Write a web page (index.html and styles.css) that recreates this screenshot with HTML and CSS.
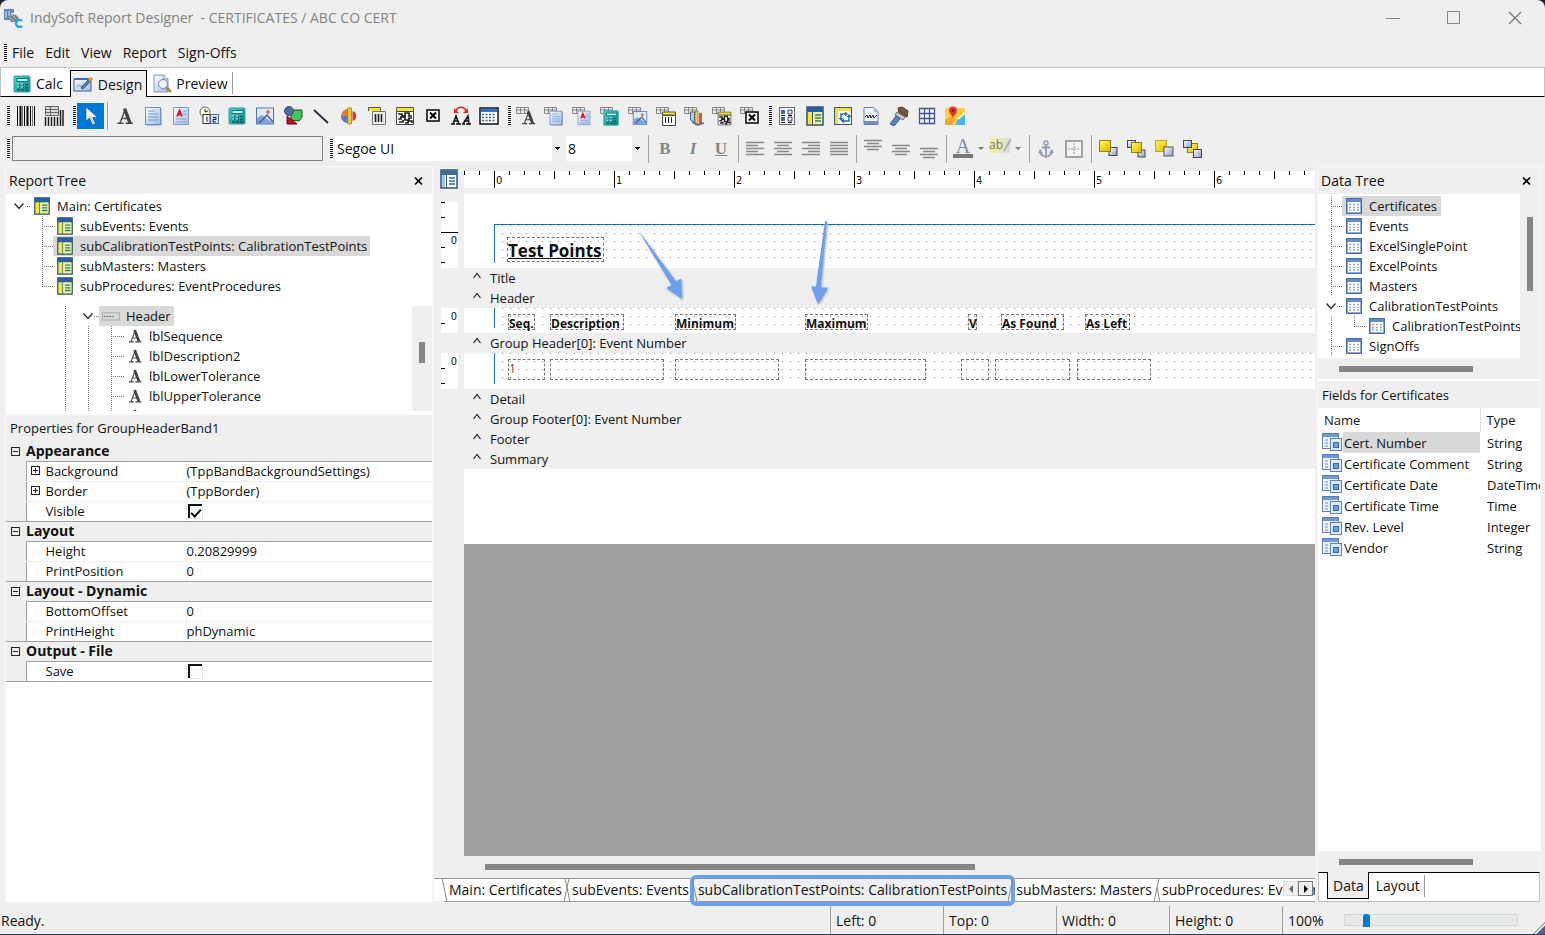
FILE: index.html
```html
<!DOCTYPE html>
<html lang="en">
<head>
    <meta charset="UTF-8">
    <meta name="viewport" content="width=device-width, initial-scale=1.0">
    <title>IndySoft Report Designer</title>
    <link rel="stylesheet" href="styles.css">
</head>
<body>
    <!-- shared icons -->
    <svg class="defs" aria-hidden="true">
        <defs>
            <linearGradient id="blue" x1="0" y1="0" x2="1" y2="1"><stop offset="0" stop-color="#fff"/><stop offset="1" stop-color="#9dbbe8"/></linearGradient>
            <linearGradient id="yellow" x1="0" y1="0" x2="1" y2="1"><stop offset="0" stop-color="#ffff50"/><stop offset="1" stop-color="#e0b400"/></linearGradient>
            <linearGradient id="steel" x1="0" y1="0" x2="1" y2="1"><stop offset="0" stop-color="#fff"/><stop offset="1" stop-color="#8c9cc4"/></linearGradient>
            <linearGradient id="teal" x1="0" y1="0" x2="1" y2="1"><stop offset="0" stop-color="#3fd6cb"/><stop offset="1" stop-color="#078c91"/></linearGradient>
        </defs>
        <symbol id="i-app" viewBox="0 0 20 20"><path d="M1 1h10v4H8v7H1z" fill="#5b88b5"/><path d="M3 3v7M6 3v5" stroke="#dbe8f5"/><path d="M5 10l4-4 4 1 3 3-4 4-4 0z" fill="#77808c"/><path d="M8 6l5 5M6 9l5 4" stroke="#c7ccd3"/><path d="M19 13a3.500 3.500 0 1 0 0 5" fill="none" stroke="#29a4dd" stroke-width="2.500"/></symbol>
        <symbol id="i-calc" viewBox="0 0 20 20"><rect x="2" y="2" width="16" height="16" rx="1" fill="url(#teal)" stroke="#3a9a9c"/><rect x="5" y="4.500" width="11" height="3" fill="#b8f3e9" stroke="#17797d"/><path d="M5 10.500h3M9 10.500h3M13 10.500h3M5 13.500h3M9 13.500h3M13 13.500h3M5 16h3M9 16h3M13 16h3" stroke="#08585e" stroke-width="1.400"/><path d="M5 10h2M9 10h2M5 13h2M9 13h2" stroke="#fff"/></symbol>
        <symbol id="i-design" viewBox="0 0 20 20"><rect x="1" y="4" width="17" height="12" fill="url(#blue)" stroke="#405c9c"/><path d="M1 4h17" stroke="#4264b4" stroke-width="2"/><path d="M4 12c2-5 3 2 6-2" fill="none" stroke="#7787a8"/><path d="M8 13l8-9 3-1-1 3-8 8z" fill="#5384c8" stroke="#333" stroke-width=".7"/><path d="M15 4l3-2 2 2-2 3z" fill="#df9b3c"/></symbol>
        <symbol id="i-preview" viewBox="0 0 20 20"><path d="M2 1h10l4 4v13H2z" fill="url(#blue)" stroke="#8796b5"/><path d="M12 1v4h4" fill="#fff" stroke="#8796b5"/><circle cx="11" cy="10" r="4.500" fill="#e9f3ff" stroke="#818b9c"/><path d="M14.500 13.500l4.500 4.500" stroke="#ad8745" stroke-width="3"/></symbol>
        <symbol id="i-bars" viewBox="0 0 20 20"><path d="M1.500 0v20M8.500 0v20M14.500 0v20M18.500 0v20" stroke="#000"/><path d="M4.500 0v20M11.500 0v20" stroke="#000" stroke-width="2"/><path d="M6.500 0v20M16.500 0v20" stroke="#777"/></symbol>
        <symbol id="i-bars2" viewBox="0 0 20 20"><path d="M1.500.5h13v9h-13zM1 3.500h13M1 6.500h13M6.500.5v9" fill="#ddd" stroke="#666"/><path d="M1.500 11v9M4.500 11v9M7.500 11v9M10.500 11v9M13.500 11v9M16.500 4v16M19 4v16" stroke="#222" stroke-width="1.500"/></symbol>
        <symbol id="i-pointer" viewBox="0 0 20 20"><path d="M5 1v14l3.500-3 3 7 3-1.500-3-6h5z" fill="#fff" stroke="#0b4f8f" stroke-width=".6"/><path d="M9 10l4 8" stroke="#a9b4bf"/></symbol>
        <symbol id="i-text" viewBox="0 0 20 20"><path d="M2.500 17.300h6M10.500 17.300h7.500" stroke="#444" stroke-width="1.500"/><path d="M5 17L10 4M7 12.500h6" fill="none" stroke="#555" stroke-width="1.500"/><path d="M9.500 2.500l5.500 14.500" stroke="#444" stroke-width="3.500"/></symbol>
        <symbol id="i-memo" viewBox="0 0 20 20"><rect x="2.500" y="1.500" width="15" height="17" fill="url(#blue)" stroke="#6e8fc9"/><path d="M5 5h7M5 8h10M5 11h10M5 14h10" stroke="#7597cf"/><path d="M18 3v16H4" fill="none" stroke="#7892bf"/></symbol>
        <symbol id="i-rich" viewBox="0 0 20 20"><rect x="2.500" y="1.500" width="15" height="17" fill="url(#blue)" stroke="#8a99c0"/><path d="M6 10.500l2.500-6 2.500 6M7 8.500h3" fill="none" stroke="#e01020" stroke-width="1.800"/><path d="M12 5h4M12 8h4M5 13h10M5 16h10" stroke="#8aa0cd"/></symbol>
        <symbol id="i-clock" viewBox="0 0 20 20"><circle cx="6" cy="6" r="5" fill="#fff8dc" stroke="#665"/><path d="M6 3v3l3-1" fill="none" stroke="#333"/><rect x="4" y="8.500" width="7" height="9" fill="#fff" stroke="#333"/><rect x="11.500" y="8.500" width="8" height="9" fill="#cfe0f7" stroke="#4f6c9a"/><path d="M7 11h1v5M14 11.500h3v2h-3v2.500h3" fill="none" stroke="#223"/></symbol>
        <symbol id="i-image" viewBox="0 0 20 20"><rect x="1.500" y="2" width="17" height="16" fill="#dcecff" stroke="#5672a8"/><path d="M2 12l5-3 4 3 7 5v1H2z" fill="#7aa2df"/><path d="M4 17l8-8 6 7" fill="none" stroke="#455b8c" stroke-width="1.500"/><circle cx="13" cy="6" r="2" fill="#e1794d"/></symbol>
        <symbol id="i-shapes" viewBox="0 0 20 20"><path d="M8 4h11v7l-3 4-8-1z" fill="#3fca54" stroke="#174d22"/><circle cx="6" cy="5" r="4.500" fill="#4d6d9d" stroke="#334d76"/><path d="M4 10l10 8H4z" fill="#c11326" stroke="#701"/></symbol>
        <symbol id="i-line" viewBox="0 0 20 20"><path d="M3 4l14 13" stroke="#222b3c" stroke-width="1.800"/></symbol>
        <symbol id="i-chart" viewBox="0 0 20 20"><path d="M9 3a7 7 0 0 0 0 14z" fill="#e87934"/><path d="M9 10H2a7 7 0 0 0 7 7z" fill="#557dd3"/><path d="M8.500 2h4v16h-4z" fill="#f4c62d" stroke="#9c7413" stroke-width=".7"/><path d="M13.500 5c5 1 5 9 0 10z" fill="#cf3b34"/></symbol>
        <symbol id="i-barcode" viewBox="0 0 20 20"><path d="M1.500 5V1.500h12V5" fill="#f4e51e" stroke="#555"/><path d="M5.500 5.500h13v13h-13z" fill="#eee" stroke="#777"/><path d="M8.500 8v8M11.500 8v8M14.500 8v8" stroke="#222" stroke-width="1.600"/></symbol>
        <symbol id="i-qr" viewBox="0 0 20 20"><path d="M1.500 1.500h17v4h-17z" fill="#f4e51e" stroke="#555"/><path d="M1.500 5.500h17v13h-17z" fill="#fff" stroke="#444"/><path d="M3 8h4v2h3V7h4v3h3M3 13h3v-2h4v3h4v-2h3M4 16h4v-2M10 17h3v-2h4v2" fill="none" stroke="#222" stroke-width="1.700"/></symbol>
        <symbol id="i-xbox" viewBox="0 0 20 20"><rect x="4" y="4" width="12" height="11" fill="#fff" stroke="#000" stroke-width="1.500"/><path d="M7 6.500l6 6M13 6.500l-6 6" stroke="#000" stroke-width="2"/></symbol>
        <symbol id="i-swap" viewBox="0 0 20 20"><path d="M5 5c2-5 8-5 10 0" fill="none" stroke="#d22" stroke-width="1.500"/><path d="M3 2v5h5zM17 2v5h-5z" fill="#d22"/><path d="M0 18h4M5 18h5M11 18h3M15 18h5M2 18l3-8 3 8M3 15h4M12 18l5-8 1 8M13 15h5" fill="none" stroke="#111" stroke-width="1.500"/></symbol>
        <symbol id="i-table" viewBox="0 0 20 20"><rect x="1" y="2" width="18" height="16" fill="#fff" stroke="#111" stroke-width="1.500"/><path d="M2 3h16v3H2z" fill="#2674c9"/><path d="M3 8.500h14M3 11.500h14M3 14.500h14" stroke="#425f9b" stroke-width="1.500" stroke-dasharray="2 1.500"/></symbol>
        <symbol id="i-dbtag" viewBox="0 0 20 20"><path d="M.5 1.500h12v6H.5zM.5 4h12M4.500 1.500v6M8.500 1.500v6" fill="#eee" stroke="#888"/></symbol>
        <symbol id="i-tree" viewBox="0 0 20 20"><rect x="2.500" y="1.500" width="15" height="17" fill="#fff" stroke="#667"/><path d="M4 4h4v4H4zM4 11h4v4H4z" fill="#3e64a0"/><path d="M11 4h4v4h-4zM11 11h4v4h-4z" fill="#dce6f5" stroke="#222" stroke-width=".8"/><path d="M4 9.500h4M4 16.500h4M11 9.500h4M11 16.500h4" stroke="#222"/></symbol>
        <symbol id="i-report" viewBox="0 0 20 20"><rect x="2" y="1" width="16" height="18" fill="#d9ef82" stroke="#345270" stroke-width="1.500"/><path d="M2 1h16v5H2z" fill="#285f9e"/><path d="M3 6h3.500v12H3z" fill="#f6e53b"/><path d="M7.500 6v13" stroke="#345270"/><path d="M8 6h9v12H8z" fill="#eef88d"/><path d="M10 9h6M10 12h6M10 15h6" stroke="#287a91" stroke-width="1.500"/></symbol>
        <symbol id="i-report-blue" viewBox="0 0 20 20"><rect x="2" y="1" width="16" height="18" fill="#fff" stroke="#345270" stroke-width="1.500"/><path d="M2 1h16v5H2z" fill="#446e91"/><path d="M3 6h3v12H3z" fill="#9bc5e8"/><path d="M7.500 6v13" stroke="#345270"/><path d="M10 9h6M10 12h6M10 15h6" stroke="#2b65b5" stroke-width="1.500"/></symbol>
        <symbol id="i-flow" viewBox="0 0 20 20"><rect x="1.500" y="1.500" width="17" height="17" fill="#fff" stroke="#456"/><path d="M2 2h16v3H2zM2 5h3v13H2z" fill="#f1df3c"/><path d="M8 13V8h4M16 9v6h-5" fill="none" stroke="#1769c2" stroke-width="1.500"/><path d="M12 5.500l3 2.500-3 2.500zM5.500 12h5l-2.500 3zM13.500 11l2.500-3 2.500 3zM11 12.500v5l-3-2.500z" fill="#1769c2"/></symbol>
        <symbol id="i-page" viewBox="0 0 20 20"><path d="M3 1.500h10l4 4v13H3z" fill="#eef4ff" stroke="#6f7fa5"/><path d="M13 2v4h4" fill="#a9b9da"/><path d="M4 11l2-2 1 3 2-3 1 3 2-3 1 3 3-3" fill="none" stroke="#222"/><path d="M3 15h14v3H3z" fill="#6b8fc6"/></symbol>
        <symbol id="i-brush" viewBox="0 0 20 20"><path d="M9 2l4-1 6 4-1 6-8-4z" fill="#76583f" stroke="#4c3524"/><path d="M8 6l8 5-2 3-8-5z" fill="#c8c8c8" stroke="#67707b"/><path d="M7 10l4 3-6 7-4-2z" fill="#5d82be" stroke="#3c578a"/></symbol>
        <symbol id="i-grid" viewBox="0 0 20 20"><path d="M2.500 2.500h15v15h-15zM7.500 2v16M12.500 2v16M2 7.500h16M2 12.500h16" fill="#f7f9ff" stroke="#3f5590" stroke-width="1.300"/></symbol>
        <symbol id="i-map" viewBox="0 0 20 20"><path d="M0 2h20v17H0z" fill="#ffcd45"/><path d="M10 19l4-8 6-3v11z" fill="#42b7f2"/><path d="M0 14l7-4 4 4-5 5H0z" fill="#f4a72d"/><path d="M13 13l7-6" stroke="#fff2b1" stroke-width="2"/><path d="M8 13C8 9 4 8 4 4.500a4 4 0 0 1 8 0C12 8 8 9 8 13z" fill="#e33327"/><circle cx="8" cy="4.500" r="1.400" fill="#8e170e"/></symbol>
        <symbol id="i-left" viewBox="0 0 20 20"><path d="M1 3.500h18M1 6.500h12M1 9.500h18M1 12.500h12M1 15.500h18" stroke="#888" stroke-width="1.500"/></symbol>
        <symbol id="i-center" viewBox="0 0 20 20"><path d="M1 3.500h18M4 6.500h12M1 9.500h18M4 12.500h12M1 15.500h18" stroke="#888" stroke-width="1.500"/></symbol>
        <symbol id="i-right" viewBox="0 0 20 20"><path d="M1 3.500h18M7 6.500h12M1 9.500h18M7 12.500h12M1 15.500h18" stroke="#888" stroke-width="1.500"/></symbol>
        <symbol id="i-justify" viewBox="0 0 20 20"><path d="M1 3.500h18M1 6.500h18M1 9.500h18M1 12.500h18M1 15.500h18" stroke="#888" stroke-width="1.500"/></symbol>
        <symbol id="i-top" viewBox="0 0 20 20"><path d="M1 1.500h18M4 4.500h12M1 7.500h18M4 10.500h12" stroke="#888" stroke-width="1.300"/></symbol>
        <symbol id="i-middle" viewBox="0 0 20 20"><path d="M1 6.500h18M4 9.500h12M1 12.500h18M4 15.500h12" stroke="#888" stroke-width="1.300"/></symbol>
        <symbol id="i-bottom" viewBox="0 0 20 20"><path d="M1 9.500h18M4 12.500h12M1 15.500h18M4 18.500h12" stroke="#888" stroke-width="1.300"/></symbol>
        <symbol id="i-anchor" viewBox="0 0 20 20"><circle cx="10" cy="4" r="2" fill="none" stroke="#8e9bb5" stroke-width="1.500"/><path d="M10 6v12M6 8.500h8M4 12c0 4 3 5 6 6 3-1 6-2 6-6" fill="none" stroke="#8e9bb5" stroke-width="1.800"/><path d="M2 14l2-4 3 4zM13 14l3-4 2 4z" fill="#8e9bb5"/></symbol>
        <symbol id="i-border" viewBox="0 0 20 20"><rect x="2" y="2" width="16" height="16" fill="#f5f5f5" stroke="#888" stroke-width="1.500"/><path d="M10 4v12M4 10h12" stroke="#999" stroke-dasharray="2 1"/></symbol>
        <symbol id="i-front" viewBox="0 0 20 20"><rect x="11" y="8.500" width="8" height="8" fill="url(#steel)" stroke="#445"/><rect x="1.500" y="1.500" width="11" height="11" fill="url(#yellow)" stroke="#967b0b"/></symbol>
        <symbol id="i-forward" viewBox="0 0 20 20"><rect x="1.500" y="1.500" width="8" height="7" fill="url(#steel)" stroke="#445"/><rect x="12" y="11" width="7" height="7" fill="url(#steel)" stroke="#445"/><rect x="5.500" y="3.500" width="10" height="10" fill="url(#yellow)" stroke="#967b0b"/></symbol>
        <symbol id="i-back" viewBox="0 0 20 20"><rect x="1.500" y="1.500" width="11" height="11" fill="url(#yellow)" stroke="#c2aa27"/><rect x="10" y="8" width="9" height="9" fill="url(#steel)" stroke="#556"/></symbol>
        <symbol id="i-backward" viewBox="0 0 20 20"><rect x="5.500" y="4.500" width="10" height="9" fill="url(#yellow)" stroke="#967b0b"/><rect x="1.500" y="1.500" width="8" height="7" fill="url(#steel)" stroke="#445"/><rect x="11.500" y="10.500" width="8" height="8" fill="url(#steel)" stroke="#445"/></symbol>
        <symbol id="i-data" viewBox="0 0 16 16"><rect x=".5" y=".5" width="15" height="15" fill="#fff" stroke="#4a6da8"/><path d="M1 1h14v3H1z" fill="#638ace"/><path d="M1.500 4v11M14.500 4v11M1 14.500h14" stroke="#8cabe0"/><path d="M3 6.500h2M7 6.500h2M11 6.500h2M3 9.500h2M7 9.500h2M11 9.500h2M3 12h2M7 12h2M11 12h2" stroke="#98a9c9" stroke-width="1.400"/></symbol>
        <symbol id="i-field" viewBox="0 0 20 18"><rect x=".5" y=".5" width="16" height="15" fill="#edf4ff" stroke="#5a7cb9"/><path d="M1 1h15v3H1z" fill="#7197d4"/><path d="M3 7h3M3 10h3M3 13h3" stroke="#758cb5"/><rect x="8.500" y="5.500" width="11" height="12" fill="#dfebfc" stroke="#5f82bb"/><rect x="11.500" y="9.500" width="5" height="5" fill="#6ba0e6" stroke="#3767ac"/></symbol>
        <symbol id="i-header" viewBox="0 0 20 20"><rect x=".5" y="6.500" width="19" height="8" fill="#d6dad6" stroke="#aaa"/><path d="M2 10.500h12" stroke="#555" stroke-dasharray="2 1"/></symbol>
        <symbol id="i-chevron" viewBox="0 0 12 12"><path d="M1.500 3.500L6 8.500l4.500-5" fill="none" stroke="#333" stroke-width="1.500"/></symbol>
        <symbol id="i-close" viewBox="0 0 12 12"><path d="M2 2.500l7 7M9 2.500l-7 7" stroke="#000" stroke-width="1.700"/></symbol>
        <symbol id="i-caret" viewBox="0 0 10 10"><path d="M1.500 7L5 2.500 8.500 7" fill="none" stroke="#222" stroke-width="1.200"/></symbol>
    </svg>

    <div class="window">
        <header class="titlebar">
            <svg class="icon"><use href="#i-app"/></svg>
            <span class="title">IndySoft Report Designer&nbsp; - CERTIFICATES / ABC CO CERT</span>
            <div class="window-buttons">
                <button aria-label="Minimize"><svg width="14" height="14"><path d="M0 7.500h14" stroke="#888"/></svg></button>
                <button aria-label="Maximize"><svg width="14" height="14"><rect x=".5" y=".5" width="12" height="12" fill="none" stroke="#888"/></svg></button>
                <button aria-label="Close"><svg width="14" height="14"><path d="M1 1l12 12M13 1L1 13" stroke="#777" stroke-width="1.300"/></svg></button>
            </div>
        </header>

        <nav class="menubar">
            <span class="grip"></span>
            <button>File</button><button>Edit</button><button>View</button><button>Report</button><button>Sign-Offs</button>
        </nav>

        <div class="mode-tabs">
            <button><svg class="icon"><use href="#i-calc"/></svg>Calc</button>
            <button class="active"><svg class="icon"><use href="#i-design"/></svg>Design</button>
            <button class="last"><svg class="icon"><use href="#i-preview"/></svg>Preview</button>
        </div>

        <div class="toolbar">
            <span class="grip"></span>
            <div class="tools">
                <button aria-label="Barcode"><svg class="icon"><use href="#i-bars"/></svg></button>
                <button aria-label="Table barcode"><svg class="icon"><use href="#i-bars2"/></svg></button>
            </div>
            <span class="grip"></span>
            <button class="selected" aria-label="Select"><svg class="icon"><use href="#i-pointer"/></svg></button>
            <span class="sep"></span>
            <div class="tools">
                <button aria-label="Label"><svg class="icon"><use href="#i-text"/></svg></button>
                <button aria-label="Memo"><svg class="icon"><use href="#i-memo"/></svg></button>
                <button aria-label="Rich text"><svg class="icon"><use href="#i-rich"/></svg></button>
                <button aria-label="System variable"><svg class="icon"><use href="#i-clock"/></svg></button>
                <button aria-label="Variable"><svg class="icon"><use href="#i-calc"/></svg></button>
                <button aria-label="Image"><svg class="icon"><use href="#i-image"/></svg></button>
                <button aria-label="Shape"><svg class="icon"><use href="#i-shapes"/></svg></button>
                <button aria-label="Line"><svg class="icon"><use href="#i-line"/></svg></button>
                <button aria-label="Chart"><svg class="icon"><use href="#i-chart"/></svg></button>
                <button aria-label="Bar code"><svg class="icon"><use href="#i-barcode"/></svg></button>
                <button aria-label="2D bar code"><svg class="icon"><use href="#i-qr"/></svg></button>
                <button aria-label="Check box"><svg class="icon"><use href="#i-xbox"/></svg></button>
                <button aria-label="Replace text"><svg class="icon"><use href="#i-swap"/></svg></button>
                <button aria-label="Table grid"><svg class="icon"><use href="#i-table"/></svg></button>
            </div>
            <span class="grip"></span>
            <div class="tools">
                <button aria-label="DB text"><svg class="icon"><use href="#i-dbtag"/><use href="#i-text" x="4" y="3" width="17" height="17"/></svg></button>
                <button aria-label="DB memo"><svg class="icon"><use href="#i-dbtag"/><use href="#i-memo" x="4" y="4" width="16" height="16"/></svg></button>
                <button aria-label="DB rich text"><svg class="icon"><use href="#i-dbtag"/><use href="#i-rich" x="4" y="4" width="16" height="16"/></svg></button>
                <button aria-label="DB calc"><svg class="icon"><use href="#i-dbtag"/><use href="#i-calc" x="2" y="3" width="18" height="18"/></svg></button>
                <button aria-label="DB image"><svg class="icon"><use href="#i-dbtag"/><use href="#i-image" x="4" y="4" width="16" height="16"/></svg></button>
                <button aria-label="DB bar code"><svg class="icon"><use href="#i-dbtag"/><path d="M6.500 9.500h13v10h-13z" fill="#fff" stroke="#444"/><path d="M6.500 6h13v3h-13z" fill="#f4e51e" stroke="#555"/><path d="M9.500 11v6M12.500 11v6M15.500 11v6" stroke="#222"/></svg></button>
                <button aria-label="DB chart"><svg class="icon"><use href="#i-dbtag"/><path d="M6.500 6h4v10l-4-2z" fill="#b9cbe8" stroke="#4d6796"/><path d="M11 5h3v14h-3z" fill="#f0d24a" stroke="#8a6c14" stroke-width=".7"/><path d="M15 7h3v11h-3z" fill="#d8582f"/><path d="M8 16l6 3 6-2" fill="none" stroke="#4d6796" stroke-width="1.500"/></svg></button>
                <button aria-label="DB 2D bar code"><svg class="icon"><use href="#i-dbtag"/><use href="#i-qr" x="5" y="5" width="15" height="15"/></svg></button>
                <button aria-label="DB check box"><svg class="icon"><use href="#i-dbtag"/><use href="#i-xbox" x="2" y="2" width="20" height="20"/></svg></button>
            </div>
            <span class="grip"></span>
            <div class="tools">
                <button aria-label="Region"><svg class="icon"><use href="#i-tree"/></svg></button>
                <button aria-label="Sub report"><svg class="icon"><use href="#i-report"/></svg></button>
                <button aria-label="Cross tab"><svg class="icon"><use href="#i-flow"/></svg></button>
                <button aria-label="Page break"><svg class="icon"><use href="#i-page"/></svg></button>
                <button aria-label="Paint box"><svg class="icon"><use href="#i-brush"/></svg></button>
                <button aria-label="Grid"><svg class="icon"><use href="#i-grid"/></svg></button>
                <button aria-label="Map"><svg class="icon"><use href="#i-map"/></svg></button>
            </div>
        </div>

        <div class="toolbar format">
            <span class="grip"></span>
            <input class="edit-box" type="text" aria-label="Component text" disabled>
            <span class="grip"></span>
            <select class="font-name" aria-label="Font name"><option>Segoe UI</option></select>
            <select class="font-size" aria-label="Font size"><option>8</option></select>
            <span class="sep"></span>
            <div class="tools letters">
                <button><b>B</b></button><button><i>I</i></button><button><u>U</u></button>
            </div>
            <span class="sep"></span>
            <div class="tools">
                <button aria-label="Align left"><svg class="icon"><use href="#i-left"/></svg></button>
                <button aria-label="Center"><svg class="icon"><use href="#i-center"/></svg></button>
                <button aria-label="Align right"><svg class="icon"><use href="#i-right"/></svg></button>
                <button aria-label="Justify"><svg class="icon"><use href="#i-justify"/></svg></button>
            </div>
            <span class="sep"></span>
            <div class="tools">
                <button aria-label="Align top"><svg class="icon"><use href="#i-top"/></svg></button>
                <button aria-label="Align middle"><svg class="icon"><use href="#i-middle"/></svg></button>
                <button aria-label="Align bottom"><svg class="icon"><use href="#i-bottom"/></svg></button>
            </div>
            <span class="sep"></span>
            <div class="tools colors">
                <button class="font-color">A</button>
                <button class="drop" aria-label="Font color list"></button>
                <button class="highlight"><span>ab</span><svg width="8" height="14"><path d="M1 13L8 1" stroke="#a4afc4" stroke-width="2"/></svg></button>
                <button class="drop" aria-label="Highlight color list"></button>
            </div>
            <span class="sep"></span>
            <div class="tools">
                <button aria-label="Anchor"><svg class="icon"><use href="#i-anchor"/></svg></button>
                <button aria-label="Border"><svg class="icon"><use href="#i-border"/></svg></button>
            </div>
            <span class="sep"></span>
            <div class="tools">
                <button aria-label="Bring to front"><svg class="icon"><use href="#i-front"/></svg></button>
                <button aria-label="Bring forward"><svg class="icon"><use href="#i-forward"/></svg></button>
                <button aria-label="Send to back"><svg class="icon"><use href="#i-back"/></svg></button>
                <button aria-label="Send backward"><svg class="icon"><use href="#i-backward"/></svg></button>
            </div>
        </div>

        <main class="workspace">
            <!-- report tree and properties -->
            <aside class="panel left-panel">
                <div class="panel-header"><h2>Report Tree</h2><button aria-label="Close report tree"><svg width="12" height="12"><use href="#i-close"/></svg></button></div>
                <ul class="tree report-tree">
                    <li>
                        <div class="node root"><svg class="chevron"><use href="#i-chevron"/></svg><span class="stub"></span><span class="label"><svg class="icon"><use href="#i-report"/></svg>Main: Certificates</span></div>
                        <ul class="branch">
                            <li class="node"><span class="link"></span><span class="label"><svg class="icon"><use href="#i-report"/></svg>subEvents: Events</span></li>
                            <li class="node"><span class="link"></span><span class="label chosen"><svg class="icon"><use href="#i-report"/></svg>subCalibrationTestPoints: CalibrationTestPoints</span></li>
                            <li class="node"><span class="link"></span><span class="label"><svg class="icon"><use href="#i-report"/></svg>subMasters: Masters</span></li>
                            <li class="node"><span class="link"></span><span class="label"><svg class="icon"><use href="#i-report"/></svg>subProcedures: EventProcedures</span></li>
                        </ul>
                    </li>
                </ul>
                <div class="object-area">
                    <ul class="tree object-tree">
                        <li>
                            <div class="node"><svg class="chevron"><use href="#i-chevron"/></svg><span class="stub"></span><span class="label chosen"><svg class="icon"><use href="#i-header"/></svg>Header</span></div>
                            <ul class="branch">
                                <li class="node"><span class="link"></span><span class="label"><svg class="icon"><use href="#i-text"/></svg>lblSequence</span></li>
                                <li class="node"><span class="link"></span><span class="label"><svg class="icon"><use href="#i-text"/></svg>lblDescription2</span></li>
                                <li class="node"><span class="link"></span><span class="label"><svg class="icon"><use href="#i-text"/></svg>lblLowerTolerance</span></li>
                                <li class="node"><span class="link"></span><span class="label"><svg class="icon"><use href="#i-text"/></svg>lblUpperTolerance</span></li>
                                <li class="node"><span class="link"></span><span class="label"><svg class="icon"><use href="#i-text"/></svg>lblVerified</span></li>
                            </ul>
                        </li>
                    </ul>
                    <div class="vscroll"><span></span></div>
                </div>
                <h3 class="props-title">Properties for GroupHeaderBand1</h3>
                <table class="props">
                    <colgroup><col class="gutter"><col class="name"><col></colgroup>
                    <tbody>
                        <tr class="group"><td><span class="box"></span></td><th colspan="2">Appearance</th></tr>
                        <tr><td></td><td><span class="box plus"></span>Background</td><td>(TppBandBackgroundSettings)</td></tr>
                        <tr><td></td><td><span class="box plus"></span>Border</td><td>(TppBorder)</td></tr>
                        <tr><td></td><td><label for="visible">Visible</label></td><td><input id="visible" type="checkbox" checked></td></tr>
                    </tbody>
                    <tbody>
                        <tr class="group"><td><span class="box"></span></td><th colspan="2">Layout</th></tr>
                        <tr><td></td><td>Height</td><td>0.20829999</td></tr>
                        <tr><td></td><td>PrintPosition</td><td>0</td></tr>
                    </tbody>
                    <tbody>
                        <tr class="group"><td><span class="box"></span></td><th colspan="2">Layout - Dynamic</th></tr>
                        <tr><td></td><td>BottomOffset</td><td>0</td></tr>
                        <tr><td></td><td>PrintHeight</td><td>phDynamic</td></tr>
                    </tbody>
                    <tbody>
                        <tr class="group"><td><span class="box"></span></td><th colspan="2">Output - File</th></tr>
                        <tr><td></td><td><label for="save">Save</label></td><td><input id="save" type="checkbox"></td></tr>
                    </tbody>
                </table>
            </aside>

            <!-- design canvas -->
            <section class="designer">
                <div class="ruler-row">
                    <svg class="icon"><use href="#i-report-blue"/></svg>
                    <div class="ruler"><span>0</span><span>1</span><span>2</span><span>3</span><span>4</span><span>5</span><span>6</span></div>
                </div>
                <div class="canvas">
                    <div class="band title-band">
                        <div class="vruler"><span>0</span></div>
                        <div class="paper">
                            <div class="dots"></div>
                            <span class="item big">Test Points</span>
                        </div>
                    </div>
                    <div class="band-bar"><svg><use href="#i-caret"/></svg>Title</div>
                    <div class="band-bar"><svg><use href="#i-caret"/></svg>Header</div>
                    <div class="band header-band">
                        <div class="vruler"><span>0</span></div>
                        <div class="paper">
                            <div class="dots"></div>
                            <span class="item h1">Seq.</span>
                            <span class="item h2">Description</span>
                            <span class="item h3">Minimum</span>
                            <span class="item h4">Maximum</span>
                            <span class="item h5">V</span>
                            <span class="item h6">As Found</span>
                            <span class="item h7">As Left</span>
                        </div>
                    </div>
                    <div class="band-bar"><svg><use href="#i-caret"/></svg>Group Header[0]: Event Number</div>
                    <div class="band detail-band">
                        <div class="vruler"><span>0</span></div>
                        <div class="paper">
                            <div class="dots"></div>
                            <span class="item d1">1</span>
                            <span class="item d2"></span>
                            <span class="item d3"></span>
                            <span class="item d4"></span>
                            <span class="item d5"></span>
                            <span class="item d6"></span>
                            <span class="item d7"></span>
                        </div>
                    </div>
                    <div class="band-bar"><svg><use href="#i-caret"/></svg>Detail</div>
                    <div class="band-bar"><svg><use href="#i-caret"/></svg>Group Footer[0]: Event Number</div>
                    <div class="band-bar"><svg><use href="#i-caret"/></svg>Footer</div>
                    <div class="band-bar"><svg><use href="#i-caret"/></svg>Summary</div>
                    <div class="page-end"></div>
                    <div class="desk"></div>
                    <svg class="arrows" width="400" height="120">
                        <path d="M174 36L212 87.500 217 84.500 218 105 202 94 207.500 91z"/>
                        <path d="M361 27h2L356.500 93.500H364L354 110 347 92.500H352z"/>
                    </svg>
                </div>
                <div class="hscroll canvas-scroll"><span></span></div>
                <div class="sheet-tabs">
                    <button>Main: Certificates</button>
                    <button>subEvents: Events</button>
                    <button class="active">subCalibrationTestPoints: CalibrationTestPoints</button>
                    <button>subMasters: Masters</button>
                    <button class="cut">subProcedures: EventProcedures</button>
                    <div class="tab-nav"><button aria-label="Previous tabs"><svg width="6" height="8"><path d="M5 0v8L1 4z" fill="#666"/></svg></button><button aria-label="Next tabs"><svg width="6" height="8"><path d="M1 0v8l4-4z"/></svg></button></div>
                </div>
            </section>

            <!-- data tree and fields -->
            <aside class="panel right-panel">
                <div class="panel-header"><h2>Data Tree</h2><button aria-label="Close data tree"><svg width="12" height="12"><use href="#i-close"/></svg></button></div>
                <div class="data-area">
                    <ul class="tree data-tree">
                        <li class="node"><span class="link"></span><span class="label chosen"><svg class="icon"><use href="#i-data"/></svg>Certificates</span></li>
                        <li class="node"><span class="link"></span><span class="label"><svg class="icon"><use href="#i-data"/></svg>Events</span></li>
                        <li class="node"><span class="link"></span><span class="label"><svg class="icon"><use href="#i-data"/></svg>ExcelSinglePoint</span></li>
                        <li class="node"><span class="link"></span><span class="label"><svg class="icon"><use href="#i-data"/></svg>ExcelPoints</span></li>
                        <li class="node"><span class="link"></span><span class="label"><svg class="icon"><use href="#i-data"/></svg>Masters</span></li>
                        <li>
                            <div class="node open"><svg class="chevron"><use href="#i-chevron"/></svg><span class="stub"></span><span class="label"><svg class="icon"><use href="#i-data"/></svg>CalibrationTestPoints</span></div>
                            <ul class="branch"><li class="node"><span class="link"></span><span class="label"><svg class="icon"><use href="#i-data"/></svg>CalibrationTestPoints</span></li></ul>
                        </li>
                        <li class="node"><span class="link"></span><span class="label"><svg class="icon"><use href="#i-data"/></svg>SignOffs</span></li>
                    </ul>
                    <div class="vscroll"><span></span></div>
                </div>
                <div class="hscroll"><span></span></div>
                <h3 class="fields-title">Fields for Certificates</h3>
                <div class="fields-area">
                    <table class="fields">
                        <thead><tr><th>Name</th><th>Type</th></tr></thead>
                        <tbody>
                            <tr class="chosen"><td><svg><use href="#i-field"/></svg>Cert. Number</td><td>String</td></tr>
                            <tr><td><svg><use href="#i-field"/></svg>Certificate Comment</td><td>String</td></tr>
                            <tr><td><svg><use href="#i-field"/></svg>Certificate Date</td><td>DateTime</td></tr>
                            <tr><td><svg><use href="#i-field"/></svg>Certificate Time</td><td>Time</td></tr>
                            <tr><td><svg><use href="#i-field"/></svg>Rev. Level</td><td>Integer</td></tr>
                            <tr><td><svg><use href="#i-field"/></svg>Vendor</td><td>String</td></tr>
                        </tbody>
                    </table>
                </div>
                <div class="hscroll"><span></span></div>
                <div class="data-tabs"><button class="active">Data</button><button class="last">Layout</button></div>
            </aside>
        </main>

        <footer class="statusbar">
            <span class="ready">Ready.</span>
            <span>Left: 0</span>
            <span>Top: 0</span>
            <span>Width: 0</span>
            <span>Height: 0</span>
            <label class="zoom" for="zoom">100%</label>
            <input id="zoom" type="range" min="0" max="100" value="11">
        </footer>
    </div>
</body>
</html>
```
FILE: styles.css
```css
* {
    box-sizing: border-box;
}
body {
    margin: 0;
    background: #1c2238;
    font-family: "Open Sans", "Noto Sans", sans-serif;
    font-size: 14px;
    line-height: 20px;
    color: #111;
}
button, input, select {
    font: inherit;
    color: inherit;
    margin: 0;
    padding: 0;
    border: 0;
    border-radius: 0;
    background: none;
}
h2, h3, ul {
    margin: 0;
    padding: 0;
    font-size: inherit;
    font-weight: normal;
    list-style: none;
}
table {
    border-collapse: collapse;
    table-layout: fixed;
}
svg {
    display: block;
    flex: none;
}
.defs {
    position: absolute;
    width: 0;
    height: 0;
}
.icon {
    width: 20px;
    height: 20px;
}
.window {
    display: flex;
    flex-direction: column;
    height: 100vh;
    background: #efefef;
    border-bottom: 1px solid #343b63;
    border-radius: 8px 8px 0 0;
    overflow: hidden;
}

/* title and menu */
.titlebar {
    display: flex;
    align-items: center;
    gap: 7px;
    height: 36px;
    padding-left: 3px;
}
.title {
    color: #828282;
}
.window-buttons {
    display: flex;
    margin-left: auto;
}
.window-buttons button {
    display: grid;
    place-items: center;
    width: 61px;
    height: 36px;
}
.grip {
    flex: none;
    width: 3px;
    height: 18px;
    background: repeating-linear-gradient(#222 0 1px, #efefef 1px 2px);
}
.menubar {
    display: flex;
    align-items: center;
    gap: 11px;
    height: 31px;
    padding: 2px 0 0 4px;
}
.menubar .grip {
    margin-right: -6px;
}
.mode-tabs {
    display: flex;
    align-items: stretch;
    height: 30px;
    padding-top: 2px;
    background: #fff;
    border: 1px solid #c4c4c4;
    border-bottom: 1px solid #000;
}
.mode-tabs button {
    display: flex;
    align-items: center;
    gap: 4px;
    padding: 2px 7px 0 11px;
}
.mode-tabs .active {
    gap: 5px;
    margin-bottom: -1px;
    padding: 1px 4px 0 2px;
    background: #efefef;
    border: 1px solid #000;
    border-bottom: 0;
}
.mode-tabs .last {
    margin: 2px 0;
    padding: 1px 4px 0 5px;
    border-right: 1px solid #999;
}

/* toolbars */
.toolbar {
    display: flex;
    align-items: center;
    height: 38px;
    padding-left: 7px;
}
.toolbar .grip {
    height: 20px;
    margin: 0 1px 0 5px;
}
.toolbar .grip:first-child {
    margin: 0 2px 0 0;
}
.toolbar button {
    display: grid;
    place-items: center;
    width: 28px;
    height: 26px;
}
.toolbar .selected {
    width: 27px;
    background: #0078d7;
}
.tools {
    display: flex;
}
.sep {
    flex: none;
    width: 1px;
    height: 28px;
    margin: 0 3px;
    background: #a0a0a0;
}
.format {
    height: 31px;
    padding-bottom: 4px;
}
.format .grip {
    margin: 0 2px 0 7px;
}
.format .sep {
    margin: 0 2px 0 3px;
}
.edit-box {
    width: 311px;
    height: 25px;
    border: 1px solid #808080;
}
select {
    appearance: none;
    height: 25px;
}
.format select {
    padding-left: 2px;
    background-color: #fff;
    background-image: linear-gradient(#000, #000), linear-gradient(#000, #000), linear-gradient(#000, #000), linear-gradient(#efefef, #efefef);
    background-size: 5px 1px, 3px 1px, 1px 1px, 12px 100%;
    background-position: right 4px top 11px, right 5px top 12px, right 6px top 13px, right 0 top 0;
    background-repeat: no-repeat;
}
.font-name {
    width: 229px;
}
.font-size {
    width: 78px;
    margin: 0 1px 0 2px;
}
.letters button {
    font-family: "Liberation Serif", serif;
    font-size: 17px;
    font-weight: bold;
    color: #858585;
}
.colors {
    padding-left: 4px;
}
.format .font-color {
    width: 20px;
    height: 20px;
    border-bottom: 4px solid #777;
    font-family: "Liberation Serif", serif;
    font-size: 20px;
    line-height: 14px;
    color: #7f8eac;
}
.format .drop {
    width: 16px;
    height: 22px;
}
.drop::after {
    content: "";
    border: 3px solid transparent;
    border-top-color: #777;
    border-bottom: 0;
}
.format .highlight {
    display: flex;
    align-items: center;
    width: 21px;
    height: 15px;
    background: linear-gradient(90deg, #f5f19b, #deded9);
    font-size: 12px;
    line-height: 12px;
    color: #777;
}

/* panels */
.workspace {
    flex: 1;
    display: flex;
    min-height: 0;
}
.panel {
    flex: none;
    display: flex;
    flex-direction: column;
    margin: 0 0 1px;
    background: #fff;
    border: solid #f8f8f8;
    border-width: 1px 1px 0;
}
.panel-header {
    flex: none;
    display: flex;
    align-items: center;
    justify-content: space-between;
    height: 27px;
    padding: 0 7px 0 3px;
    background: #efefef;
}
.left-panel {
    width: 428px;
    margin-left: 5px;
}
.tree {
    font-size: 13px;
}
.node {
    display: flex;
    align-items: center;
    height: 20px;
    white-space: nowrap;
}
.label {
    display: flex;
    align-items: center;
    gap: 6px;
    height: 20px;
    padding: 0 3px;
}
.chosen {
    background: #d9d9d9;
}
.tree .icon {
    width: 18px;
    height: 18px;
}
.chevron {
    width: 12px;
    height: 12px;
}
.stub, .link {
    flex: none;
    height: 1px;
    background: repeating-linear-gradient(90deg, #777 0 1px, transparent 1px 2px);
}
.stub {
    width: 5px;
}
.link {
    width: 11px;
}
.branch > .node, .data-tree > .node {
    background: repeating-linear-gradient(#777 0 1px, transparent 1px 2px) 0 0/1px 100% no-repeat;
}
.branch > .node:last-child {
    background-size: 1px 50%;
}
.report-tree {
    height: 112px;
    padding-top: 2px;
}
.report-tree .root {
    padding-left: 7px;
}
.report-tree .branch {
    margin-left: 36px;
}
.object-area {
    display: flex;
    height: 109px;
    padding-bottom: 4px;
}
.object-tree {
    flex: 1;
    overflow: hidden;
    padding-left: 76px;
    background: repeating-linear-gradient(#777 0 1px, transparent 1px 2px) 59px 0/1px 100% no-repeat;
}
.object-tree .branch {
    margin-left: 6px;
    padding-left: 23px;
    background: repeating-linear-gradient(#777 0 1px, transparent 1px 2px) 0 0/1px 100% no-repeat;
}
.object-tree .link {
    width: 13px;
}
.object-tree .branch .icon {
    width: 16px;
    height: 16px;
}
.vscroll {
    flex: none;
    width: 20px;
    padding: 36px 7px 0;
    background: #efefef;
}
.vscroll span {
    display: block;
    width: 6px;
    height: 21px;
    background: #858585;
}
.props-title {
    height: 26px;
    padding: 3px 4px;
    background: #efefef;
    font-size: 13px;
}
.props {
    width: 100%;
    font-size: 13px;
}
.props .gutter {
    width: 20px;
}
.props .name {
    width: 160px;
}
.props tr {
    height: 20px;
}
.props td, .props th {
    padding: 0;
    line-height: 18px;
    text-align: left;
}
.props td:first-child, .group {
    background: #efefef;
}
.props tr:not(.group) td {
    border-bottom: 1px solid #efefef;
}
.props td:nth-child(2) {
    padding-left: 19px;
    border-left: 1px solid #a0a0a0;
    border-right: 1px solid #efefef;
}
.props .group th {
    border-bottom: 1px solid #a0a0a0;
    font-size: 14px;
}
.props tbody tr:last-child td {
    border-bottom: 1px solid #a0a0a0;
}
.box {
    display: block;
    width: 9px;
    height: 9px;
    margin-left: 5px;
    border: 1px solid #222;
    background: linear-gradient(#222, #222) center/5px 1px no-repeat;
}
.plus {
    float: left;
    margin: 4px 6px 0 -15px;
    background: linear-gradient(#222, #222) center/5px 1px no-repeat, linear-gradient(#222, #222) center/1px 5px no-repeat;
}
.props input {
    appearance: none;
    display: grid;
    place-items: center;
    width: 14px;
    height: 14px;
    margin-left: 1px;
    border: solid #111;
    border-width: 2px 0 0 2px;
    box-shadow: 1px 1px #e4e4e4;
}
.props input:checked::after {
    content: "";
    width: 4px;
    height: 8px;
    border: solid #000;
    border-width: 0 2px 2px 0;
    transform: rotate(42deg);
}

/* designer */
.designer {
    flex: 1;
    display: flex;
    flex-direction: column;
    min-width: 0;
    margin: 0 2px 1px 1px;
}
.ruler-row {
    display: flex;
    align-items: center;
    gap: 5px;
    height: 28px;
    padding: 0 0 2px 5px;
}
.ruler {
    flex: 1;
    display: flex;
    height: 17px;
    padding-left: 32px;
    overflow: hidden;
    background:
        linear-gradient(90deg, #000 1px, transparent 1px) 30px 0/120px 17px repeat-x,
        linear-gradient(90deg, #000 1px, transparent 1px) 90px 0/120px 8px repeat-x,
        linear-gradient(90deg, #000 1px, transparent 1px) 0 0/15px 4px repeat-x,
        #fff;
    font-family: "DejaVu Sans Condensed", "DejaVu Sans", sans-serif;
    font-size: 11px;
}
.ruler span {
    flex: none;
    width: 120px;
}
.canvas {
    position: relative;
    flex: 1;
    display: flex;
    flex-direction: column;
    min-height: 0;
}
.band {
    flex: none;
    display: flex;
    gap: 6px;
}
.vruler {
    width: 17px;
    margin-left: 7px;
    padding-right: 1px;
    text-align: right;
    font-family: "DejaVu Sans Condensed", "DejaVu Sans", sans-serif;
    font-size: 11px;
    line-height: 17px;
    background:
        linear-gradient(#fff, #fff) 0 0/17px 14px no-repeat,
        linear-gradient(#000 1px, transparent 1px) 0 0/4px 15px repeat-y,
        #fff;
}
.title-band .vruler {
    margin-top: 8px;
    padding-top: 30px;
    background:
        linear-gradient(#000, #000) 0 30px/17px 1px no-repeat,
        linear-gradient(#000 1px, transparent 1px) 0 0/4px 15px repeat-y,
        #fff;
}
.paper {
    position: relative;
    flex: 1;
    padding: 0 0 5px 30px;
    background: #fff;
}
.title-band {
    height: 74px;
}
.title-band .paper {
    padding-top: 30px;
}
.header-band {
    height: 25px;
}
.detail-band {
    height: 36px;
}
.dots {
    height: 100%;
    border-left: 1px solid #1677be;
    background:
        linear-gradient(transparent 1px, #fff 1px) 0 0/8px 8px,
        linear-gradient(90deg, transparent 7px, #888 7px) 0 0/8px 8px;
}
.title-band .dots {
    border-top: 1px solid #0a6fb5;
}
.item {
    position: absolute;
    top: 6px;
    height: 16px;
    border: 1px dashed #777;
    font-size: 12px;
    font-weight: bold;
    line-height: 17px;
    white-space: nowrap;
}
.title-band .big {
    left: 43px;
    top: 43px;
    width: 97px;
    height: 25px;
    font-size: 17px;
    line-height: 26px;
    text-decoration: underline;
}
.h1 { left: 44px; width: 27px; }
.h2 { left: 86px; width: 74px; }
.h3 { left: 211px; width: 61px; }
.h4 { left: 341px; width: 63px; }
.h5 { left: 504px; width: 9px; }
.h6 { left: 537px; width: 63px; }
.h7 { left: 621px; width: 45px; }
.detail-band .item {
    height: 21px;
    font-weight: normal;
    color: #555;
}
.d1 { left: 44px; width: 37px; }
.d2 { left: 86px; width: 114px; }
.d3 { left: 211px; width: 104px; }
.d4 { left: 341px; width: 121px; }
.d5 { left: 497px; width: 28px; }
.d6 { left: 531px; width: 75px; }
.d7 { left: 613px; width: 74px; }
.band-bar {
    flex: none;
    display: flex;
    align-items: center;
    gap: 8px;
    height: 20px;
    padding-left: 38px;
    font-size: 13px;
}
.band-bar svg {
    width: 10px;
    height: 10px;
    margin-top: -4px;
}
.page-end {
    flex: none;
    height: 75px;
    margin-left: 30px;
    background: #fff;
}
.desk {
    flex: 1;
    margin-left: 30px;
    background: #a0a0a0;
}
.arrows {
    position: absolute;
    left: 30px;
    top: 0;
    fill: #6b9ff0;
    filter: drop-shadow(1px 1px 1px #9aa4b4);
}
.hscroll {
    flex: none;
    height: 21px;
    padding: 8px 0 0 21px;
    background: #efefef;
}
.hscroll span {
    display: block;
    width: 134px;
    height: 6px;
    background: #858585;
}
.canvas-scroll {
    height: 22px;
    padding-left: 51px;
}
.canvas-scroll span {
    width: 59%;
}
.sheet-tabs {
    position: relative;
    flex: none;
    display: flex;
    height: 24px;
    padding-left: 10px;
    border-top: 1px solid #999;
    background: linear-gradient(#fff, #fff) 0 0/100% 22px no-repeat;
}
.sheet-tabs > button {
    flex: none;
    position: relative;
    height: 23px;
    padding: 0 5px;
    border-bottom: 1px solid #999;
    white-space: nowrap;
}
.sheet-tabs > .cut {
    flex: 0 1 auto;
    min-width: 0;
    overflow: hidden;
    text-align: left;
}
.sheet-tabs > button::before, .sheet-tabs > button::after {
    content: "";
    position: absolute;
    top: 0;
    bottom: 0;
    left: 0;
    border-left: 1px solid #888;
    transform: skewX(12deg);
}
.sheet-tabs > button::after {
    left: auto;
    right: 0;
    transform: skewX(-12deg);
}
.sheet-tabs > .cut::after {
    display: none;
}
.sheet-tabs > .active {
    padding: 0 4px;
    background: #efefef;
    outline: 4px solid #6b9ff0;
    border-radius: 2px;
    z-index: 1;
}
.tab-nav {
    position: absolute;
    right: 2px;
    top: 2px;
    display: flex;
    background: #efefef;
}
.tab-nav button {
    display: grid;
    place-items: center;
    width: 15px;
    height: 15px;
    border: 1px solid #ddd;
}
.tab-nav button:last-child {
    border-color: #777;
}

/* right side */
.right-panel {
    width: 224px;
    margin-right: 4px;
}
.data-area {
    display: flex;
    height: 164px;
}
.data-tree {
    flex: 1;
    min-width: 0;
    overflow: hidden;
    padding: 2px 0 0 13px;
}
.data-tree .label {
    gap: 7px;
    padding: 0 4px;
}
.data-tree .icon {
    width: 16px;
    height: 16px;
}
.data-tree .open {
    margin-left: -6px;
}
.data-tree .branch {
    padding-left: 23px;
    background: repeating-linear-gradient(#777 0 1px, transparent 1px 2px) 0 0/1px 100% no-repeat;
}
.data-area .vscroll {
    padding-top: 23px;
}
.data-area .vscroll span {
    height: 74px;
}
.fields-title {
    height: 29px;
    padding: 4px;
    border-top: 2px solid #fff;
    background: #efefef;
    font-size: 13px;
}
.fields-area {
    flex: 1;
    overflow: hidden;
}
.fields {
    width: 100%;
    font-size: 13px;
}
.fields th, .fields td {
    height: 21px;
    padding: 0;
    font-weight: normal;
    text-align: left;
    line-height: 20px;
    white-space: nowrap;
    overflow: hidden;
}
.fields th {
    height: 24px;
    padding-left: 6px;
}
.fields th:first-child {
    width: 162px;
    border-right: 1px solid #ddd;
}
.fields td:first-child {
    padding-left: 4px;
}
.fields td:last-child {
    padding-left: 7px;
}
.fields svg {
    float: left;
    width: 20px;
    height: 18px;
    margin-right: 2px;
}
.fields .chosen {
    background: #fff;
}
.fields .chosen td:first-child {
    background: linear-gradient(#d9d9d9, #d9d9d9) 25px 0 no-repeat;
}
.data-tabs {
    flex: none;
    display: flex;
    height: 30px;
    padding-left: 8px;
    border: 1px solid #bbb;
    border-top-color: #000;
    background: #fff;
}
.data-tabs .active {
    height: 27px;
    margin-top: -1px;
    padding: 2px 4px 0 5px;
    background: #efefef;
    border: 1px solid #000;
    border-top: 0;
}
.data-tabs .last {
    height: 22px;
    margin-top: 2px;
    padding: 0 4px 0 7px;
    border-right: 1px solid #999;
}

/* status bar */
.statusbar {
    flex: none;
    display: flex;
    align-items: center;
    height: 31px;
    padding: 3px 27px 0 1px;
    background: linear-gradient(135deg, transparent 50%, #aaa 50% 58%, #efefef 58% 66%, #555d94 66%) right bottom/12px 12px no-repeat;
}
.statusbar span, .zoom {
    flex: none;
    width: 113px;
    padding: 5px 0 3px 5px;
    border-left: 1px solid #a0a0a0;
}
.statusbar .ready {
    flex: 1;
    padding-left: 0;
    border: 0;
}
.statusbar .zoom {
    width: 62px;
}
#zoom {
    appearance: none;
    width: 174px;
    height: 12px;
    background: #e7eaea;
    border: 1px solid #d6d6d6;
}
#zoom::-webkit-slider-thumb {
    appearance: none;
    width: 7px;
    height: 13px;
    background: #0078d7;
    border-radius: 3px 3px 0 0;
}
```
